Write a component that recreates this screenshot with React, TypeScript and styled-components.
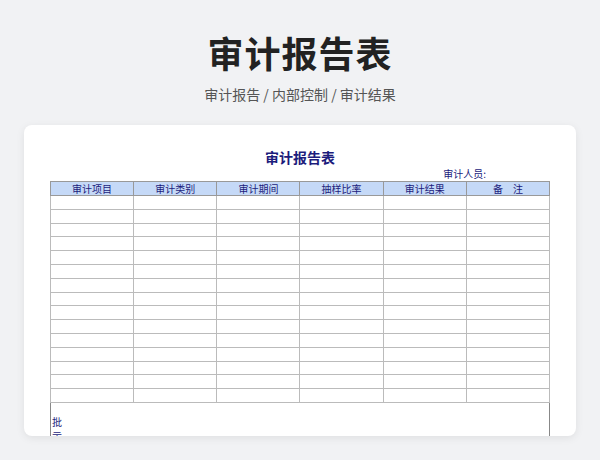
import React from "react";
import styled, { createGlobalStyle } from "styled-components";

const G = createGlobalStyle`
  html,body{margin:0;padding:0;background:#f1f2f4;font-family:"Noto Sans CJK SC","Noto Sans",sans-serif;}
`;
const Page = styled.div`height:460px;overflow:hidden;display:flex;flex-direction:column;align-items:center;`;
const H1 = styled.h1`margin:30px 0 0;font-size:36px;line-height:44px;font-weight:700;color:#222;letter-spacing:1px;`;
const Sub = styled.div`margin-top:10px;font-size:14px;line-height:20px;color:#555;`;
const Card = styled.div`margin-top:21px;width:552px;height:311px;background:#fff;border-radius:8px;box-shadow:0 2px 8px rgba(0,0,0,0.08);overflow:hidden;box-sizing:border-box;padding:22px 26px 0;`;
const Title = styled.div`text-align:center;font-size:14px;font-weight:700;color:#1c1c7c;line-height:20px;`;
const Staff = styled.div`text-align:right;padding-right:64px;font-size:10px;color:#1c1c7c;line-height:14px;`;
const Table = styled.table`width:500px;border-collapse:collapse;table-layout:fixed;border:1px solid #888;`;
const Th = styled.th`background:#c5d9f7;color:#1c1c7c;font-size:10px;font-weight:400;height:13px;line-height:13px;padding:0;border:1px solid #999;`;
const Td = styled.td`height:12.8px;padding:0;border:1px solid #bbb;`;
const Note = styled.td`height:40px;padding:12px 0 0 1px;vertical-align:top;font-size:10px;color:#1c1c7c;line-height:14px;border:1px solid #888;`;

const heads = ["审计项目","审计类别","审计期间","抽样比率","审计结果","备　注"];
export default function App(){
  return <Page><G/>
    <H1>审计报告表</H1>
    <Sub>审计报告 / 内部控制 / 审计结果</Sub>
    <Card>
      <Title>审计报告表</Title>
      <Staff>审计人员:</Staff>
      <Table>
        <thead><tr>{heads.map(h=><Th key={h}>{h}</Th>)}</tr></thead>
        <tbody>
          {Array.from({length:15}).map((_,i)=><tr key={i}>{heads.map(h=><Td key={h}/>)}</tr>)}
          <tr><Note colSpan={6}>批<br/>示</Note></tr>
        </tbody>
      </Table>
    </Card>
  </Page>;
}
